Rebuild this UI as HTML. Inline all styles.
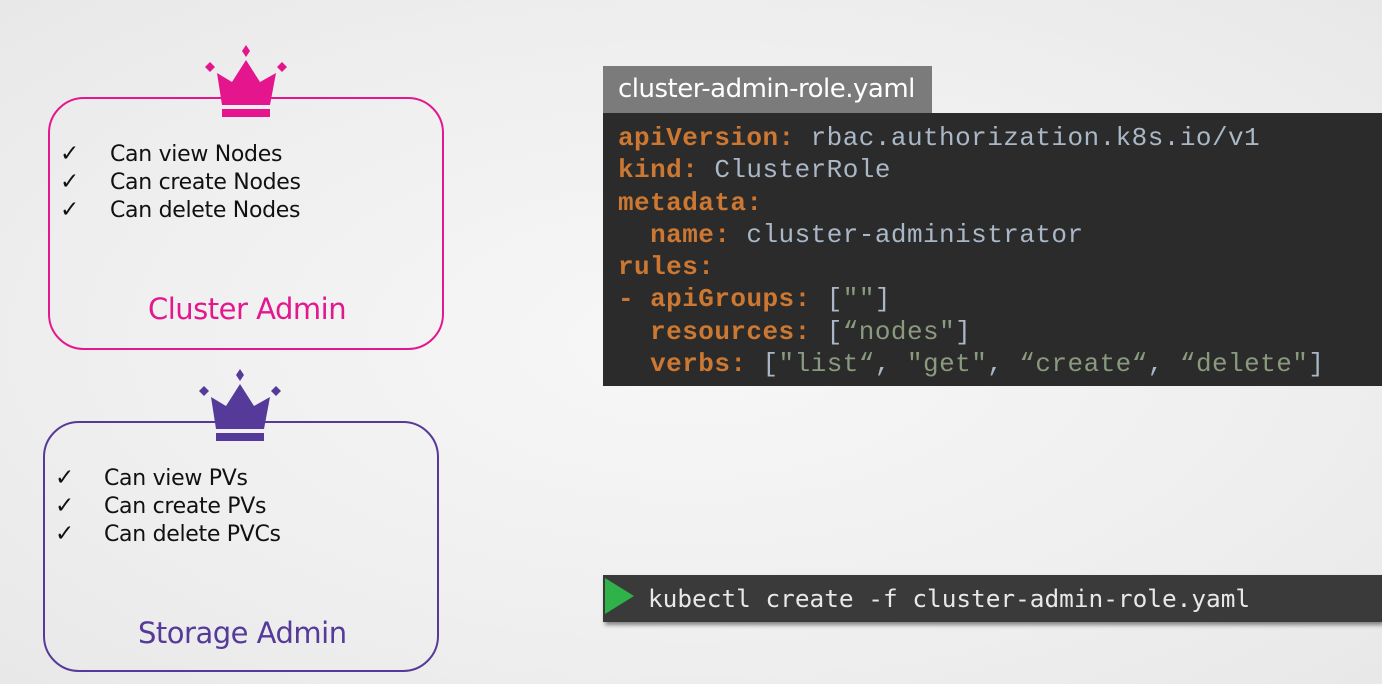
<!DOCTYPE html>
<html><head><meta charset="utf-8"><style>
body{margin:0;width:1382px;height:684px;overflow:hidden;position:relative;background:radial-gradient(ellipse at 50% 50%,#f7f7f7 0%,#efefef 60%,#e8e8e8 100%);font-family:"Liberation Sans","DejaVu Sans",sans-serif}
.box{position:absolute;border-radius:36px;box-sizing:border-box}
.b1{left:48px;top:97px;width:396px;height:253px;border:2px solid #e3178e}
.b2{left:43px;top:421px;width:396px;height:251px;border:2px solid #553a99}
.li{position:absolute;font-size:22px;color:#111;font-family:"DejaVu Sans",sans-serif;letter-spacing:-0.3px}
.ck{position:absolute;font-size:23px;color:#111;font-family:"DejaVu Sans",sans-serif}
.title{position:absolute;font-size:29px;font-family:"DejaVu Sans",sans-serif;letter-spacing:-0.5px}
.tab{position:absolute;left:603px;top:66px;width:329px;height:47px;background:#7b7b7b;color:#fff;font-size:26px;font-family:"DejaVu Sans",sans-serif;line-height:47px;padding-left:15px;box-sizing:border-box;letter-spacing:-0.5px}
.code{position:absolute;left:603px;top:113px;width:779px;height:273px;background:#2b2b2b;box-sizing:border-box;padding:9px 0 0 15px;font-family:"Liberation Mono",monospace;font-size:26px;letter-spacing:0.45px;line-height:32.3px;color:#a9b7c6;white-space:pre}
.k{color:#cc7832;font-weight:bold}
.s{color:#8a9a7e}
.cmd{position:absolute;left:603px;top:575px;width:779px;height:47px;background:#3a3a3a;box-shadow:2px 3px 4px rgba(0,0,0,.45);font-family:"DejaVu Sans Mono",monospace;font-size:24.4px;color:#e8e8e8;line-height:47px;padding-left:45px;box-sizing:border-box;white-space:pre}
</style></head><body>
<svg style="position:absolute;left:205px;top:45px" width="82" height="75" viewBox="0 0 82 75"><g fill="#e5158d"><polygon points="41,0 45,6 41,12 37,6"/><polygon points="5,17 10,22 5,27 0,22"/><polygon points="77,17 82,22 77,27 72,22"/><polygon points="12,28 27,37 41,15 55,37 71,28 65,60 17,60"/><rect x="17" y="64" width="48" height="8"/></g></svg>
<div class="box b1"></div>
<div class="ck" style="left:60px;top:141px">✓</div><div class="li" style="left:110px;top:142px">Can view Nodes</div>
<div class="ck" style="left:60px;top:169px">✓</div><div class="li" style="left:110px;top:170px">Can create Nodes</div>
<div class="ck" style="left:60px;top:197px">✓</div><div class="li" style="left:110px;top:198px">Can delete Nodes</div>
<div class="title" style="left:148px;top:292px;color:#e3178e">Cluster Admin</div>
<svg style="position:absolute;left:199px;top:369px" width="82" height="75" viewBox="0 0 82 75"><g fill="#553a99"><polygon points="41,0 45,6 41,12 37,6"/><polygon points="5,17 10,22 5,27 0,22"/><polygon points="77,17 82,22 77,27 72,22"/><polygon points="12,28 27,37 41,15 55,37 71,28 65,60 17,60"/><rect x="17" y="64" width="48" height="8"/></g></svg>
<div class="box b2"></div>
<div class="ck" style="left:55px;top:465px">✓</div><div class="li" style="left:104px;top:466px">Can view PVs</div>
<div class="ck" style="left:55px;top:493px">✓</div><div class="li" style="left:104px;top:494px">Can create PVs</div>
<div class="ck" style="left:55px;top:521px">✓</div><div class="li" style="left:104px;top:522px">Can delete PVCs</div>
<div class="title" style="left:138px;top:616px;color:#553a99">Storage Admin</div>
<div class="tab">cluster-admin-role.yaml</div>
<div class="code"><span class="k">apiVersion:</span> rbac.authorization.k8s.io/v1
<span class="k">kind:</span> ClusterRole
<span class="k">metadata:</span>
  <span class="k">name:</span> cluster-administrator
<span class="k">rules:</span>
<span class="k">-</span> <span class="k">apiGroups:</span> [<span class="s">""</span>]
  <span class="k">resources:</span> [<span class="s">“nodes"</span>]
  <span class="k">verbs:</span> [<span class="s">"list“</span>, <span class="s">"get"</span>, <span class="s">“create“</span>, <span class="s">“delete"</span>]</div>
<div class="cmd">kubectl create -f cluster-admin-role.yaml</div>
<svg style="position:absolute;left:605px;top:578px" width="30" height="36" viewBox="0 0 30 36"><polygon points="0,0 29,18 0,36" fill="#2fb24a"/></svg>
</body></html>
